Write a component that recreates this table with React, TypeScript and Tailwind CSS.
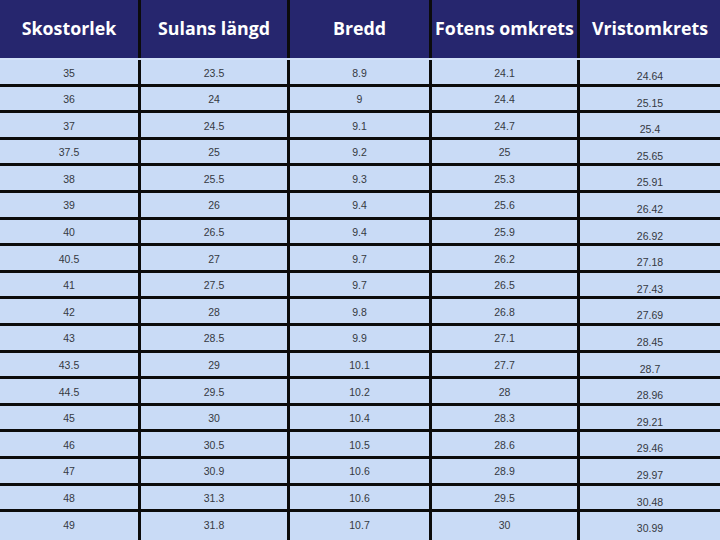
import React from "react";

const headers = ["Skostorlek", "Sulans längd", "Bredd", "Fotens omkrets", "Vristomkrets"];

const rows: string[][] = [
  ["35", "23.5", "8.9", "24.1", "24.64"],
  ["36", "24", "9", "24.4", "25.15"],
  ["37", "24.5", "9.1", "24.7", "25.4"],
  ["37.5", "25", "9.2", "25", "25.65"],
  ["38", "25.5", "9.3", "25.3", "25.91"],
  ["39", "26", "9.4", "25.6", "26.42"],
  ["40", "26.5", "9.4", "25.9", "26.92"],
  ["40.5", "27", "9.7", "26.2", "27.18"],
  ["41", "27.5", "9.7", "26.5", "27.43"],
  ["42", "28", "9.8", "26.8", "27.69"],
  ["43", "28.5", "9.9", "27.1", "28.45"],
  ["43.5", "29", "10.1", "27.7", "28.7"],
  ["44.5", "29.5", "10.2", "28", "28.96"],
  ["45", "30", "10.4", "28.3", "29.21"],
  ["46", "30.5", "10.5", "28.6", "29.46"],
  ["47", "30.9", "10.6", "28.9", "29.97"],
  ["48", "31.3", "10.6", "29.5", "30.48"],
  ["49", "31.8", "10.7", "30", "30.99"],
];

export default function App() {
  return (
    <div className="w-[720px] h-[540px] overflow-hidden bg-[#c9dbf6] flex flex-col">
      <div
        className="grid grid-cols-[141px_149px_142px_148px_1fr] h-[58px] shrink-0 bg-[#26266e] text-white font-bold text-[17.8px]"
        style={{ fontFamily: '"Open Sans", sans-serif' }}
      >
        {headers.map((h, i) => (
          <div
            key={h}
            className={`flex items-center justify-center pb-[2px] whitespace-nowrap ${
              i < 4 ? "border-r-[3px] border-[#0b0b0b]" : ""
            }`}
          >
            {h}
          </div>
        ))}
      </div>
      <div className="h-[2px] shrink-0 bg-[#d3e2f8]" />
      <div
        className="flex flex-col flex-1 text-[10.5px] text-[#353941]"
        style={{ fontFamily: '"Liberation Sans", Arial, sans-serif' }}
      >
        {rows.map((r, ri) => {
          const last = ri === rows.length - 1;
          return (
            <div
              key={ri}
              className={`grid grid-cols-[141px_149px_142px_148px_1fr] ${
                last ? "flex-1" : "h-[26.6px] shrink-0 border-b-[3px] border-[#0b0b0b]"
              }`}
            >
              {r.map((c, ci) => (
                <div
                  key={ci}
                  className={`flex justify-center ${
                    ci < 4
                      ? "border-r-[3px] border-[#0b0b0b] items-start pt-[5.5px]"
                      : "items-start pt-[9px]"
                  }`}
                >
                  {c}
                </div>
              ))}
            </div>
          );
        })}
      </div>
    </div>
  );
}
